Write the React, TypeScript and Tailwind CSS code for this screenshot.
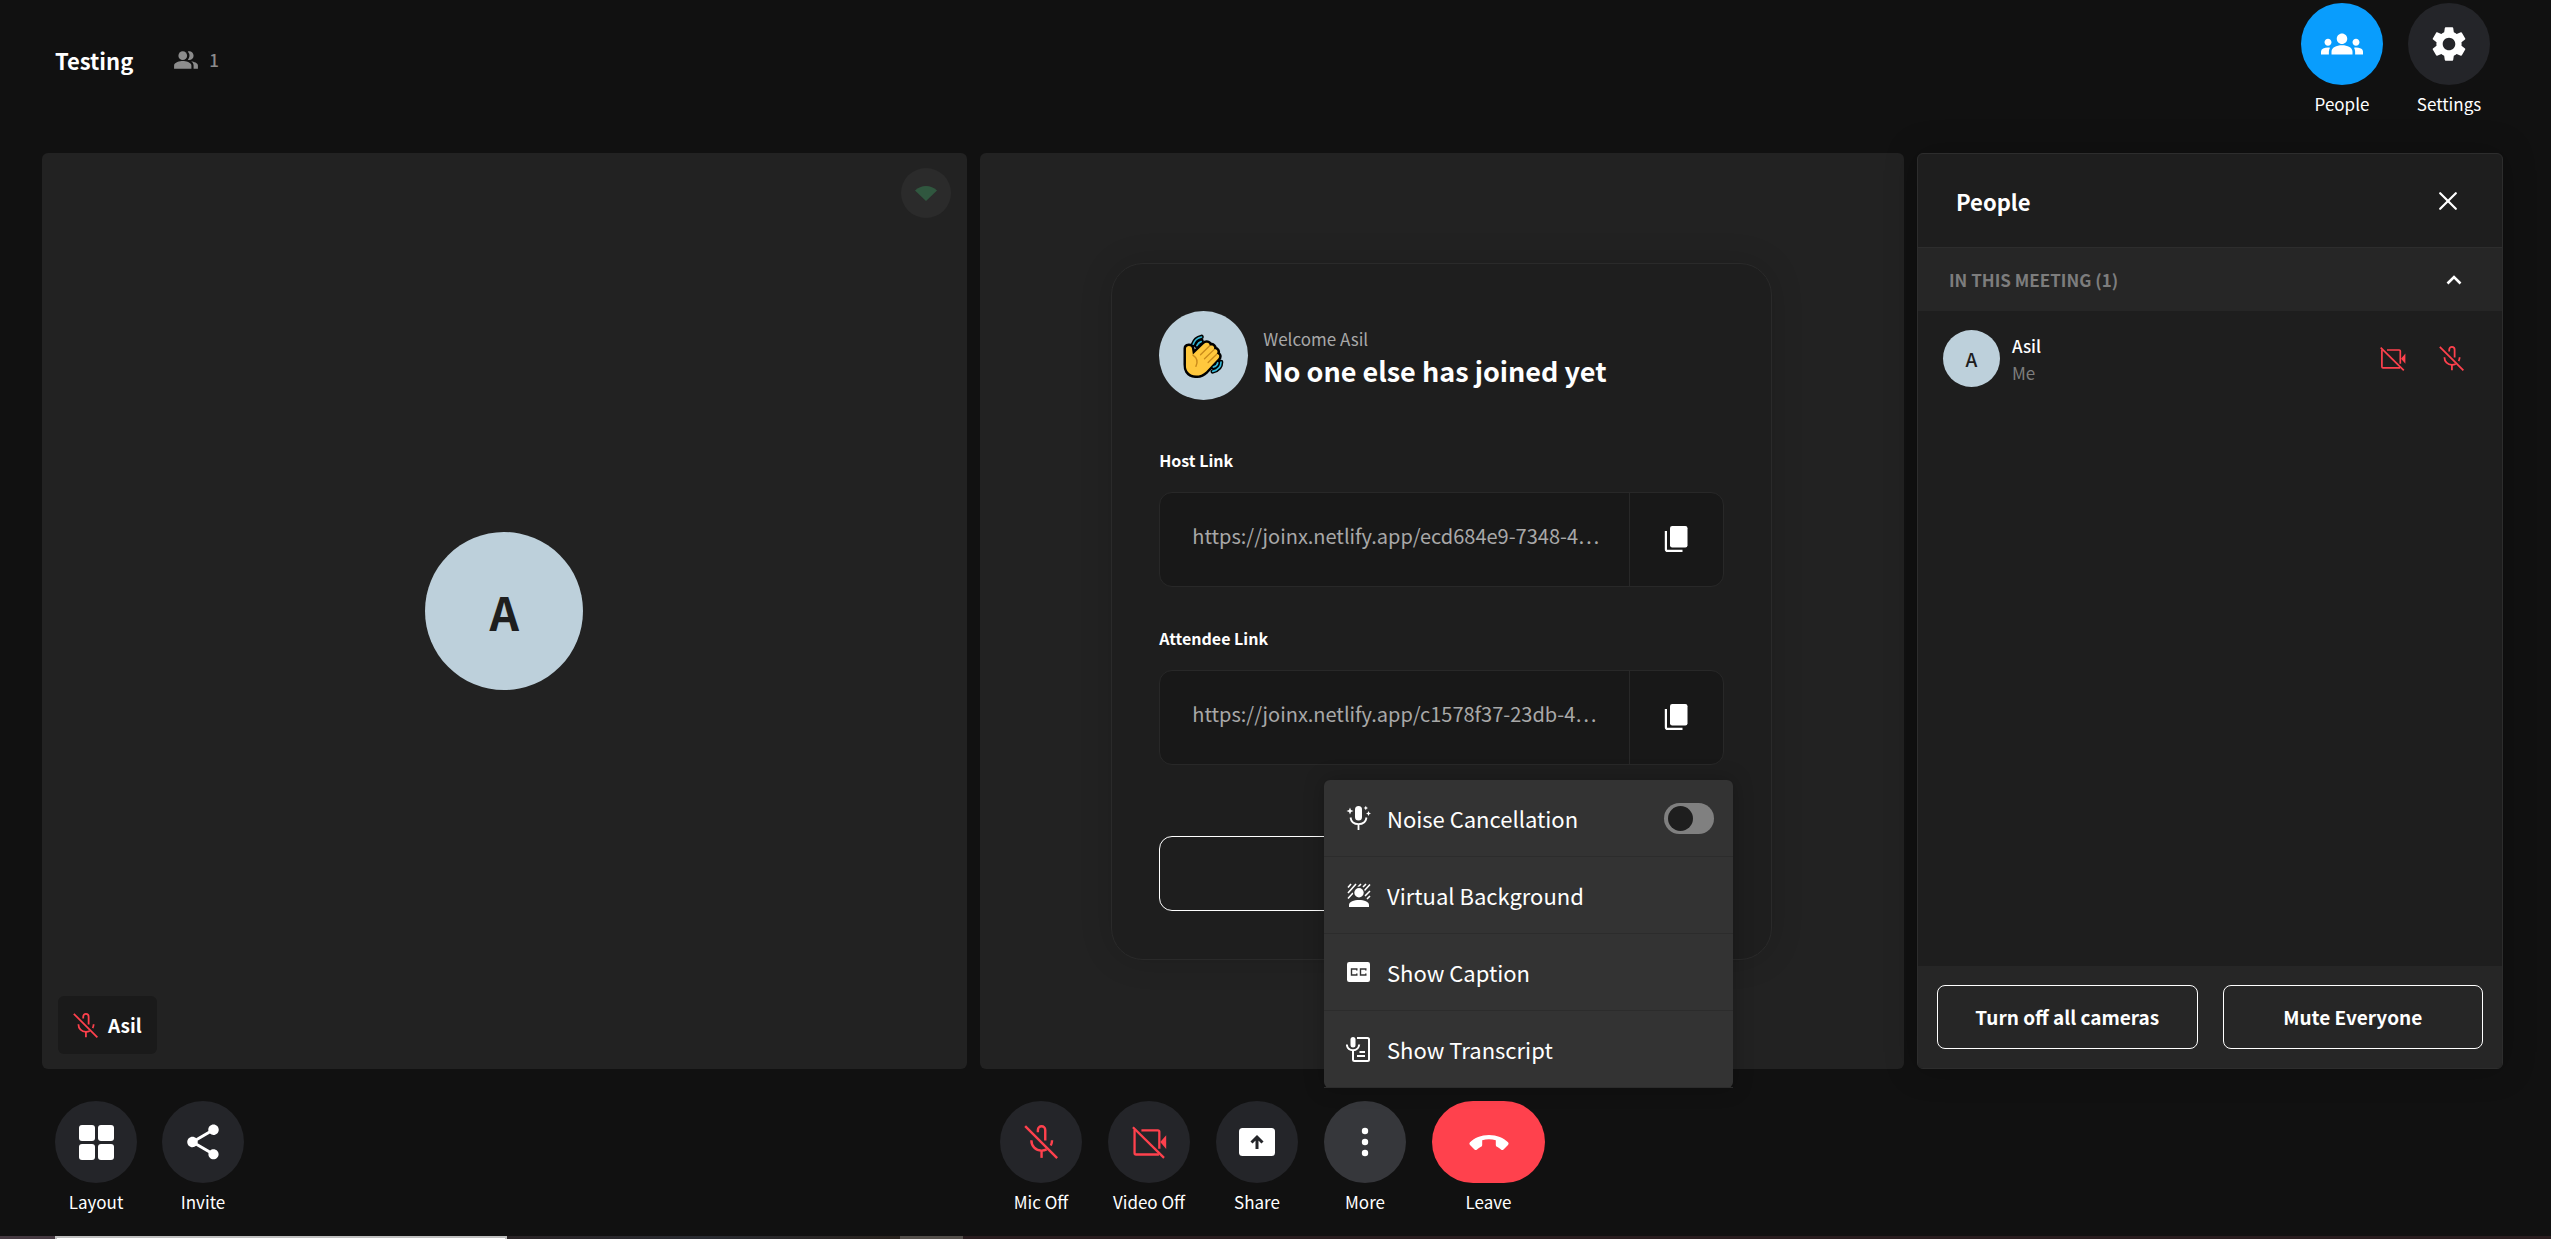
import React, { useState } from "react";
import { MdGroups, MdPeopleAlt, MdSettings, MdShare } from "react-icons/md";

const font = "font-['Noto_Sans_CJK_SC','Noto_Sans',sans-serif]";

function MicOff({ className }: { className: string }) {
  return (
    <svg viewBox="0 0 24 24" className={className} fill="none" stroke="#ff414d" strokeWidth="1.7" aria-hidden="true">
      <path d="M.8.8 23.4 23.4" />
      <path d="M9.8 5.2V3.5a2.6 2.6 0 0 1 5.2 0V11" />
      <path d="M5.2 10.8c0 4.2 3 7.3 7.2 7.3 1.4 0 2.5-.3 3.6-.9" />
      <path d="M19.8 10.8c0 1.5-.3 2.6-.9 3.7" />
      <path d="M12.4 18v5.2" />
    </svg>
  );
}

function VideoOff({ className }: { className: string }) {
  return (
    <svg viewBox="0 0 26 24" className={className} fill="none" stroke="#ff414d" strokeWidth="1.7" aria-hidden="true">
      <path d="M.7.7 23.8 23.4" />
      <path d="M1.9 2.4v17.4c0 .7.4 1.1 1.1 1.1h17" />
      <path d="M7 3h12.2c.7 0 1.1.4 1.1 1.1v12.6" />
      <path d="M21 11.7 25.4 6.6v10.2Z" fill="#ff414d" stroke="none" />
    </svg>
  );
}

function Round({ label, tone = "bg-[#242529]", wide = false, children }: { label: string; tone?: string; wide?: boolean; children: React.ReactNode }) {
  return (
    <button type="button" className="flex flex-col items-center gap-[7px]">
      <span className={`flex h-[82px] items-center justify-center rounded-full ${wide ? "w-[113px]" : "w-[82px]"} ${tone}`}>{children}</span>
      <span className="text-[17px] leading-6">{label}</span>
    </button>
  );
}

const hand =
  "M107 143c0-10 16-11 18-1l3 19 32-31c10-9 21-3 18 5 9-5 18 3 13 11 9-3 15 6 9 13 8 1 10 9 4 15l-36 38c-18 17-45 17-57-1-5-8-4-16-4-26Z";

function ClapHand() {
  return (
    <svg viewBox="95 96 130 136" className="h-[45px] w-[43px]" fill="none" strokeLinecap="round" strokeLinejoin="round" aria-hidden="true">
      <g stroke="#000" strokeWidth="14">
        <path d="M129 130c4-12 12-19 25-22M138 134c3-7 8-12 16-14" />
        <path d="M213 184c0 14-9 24-25 28M203 184c-1 7-6 13-14 15" />
      </g>
      <path d={hand} stroke="#000" strokeWidth="15" />
      <g stroke="#35b8d8" strokeWidth="5">
        <path d="M129 130c4-12 12-19 25-22M140 134c3-6 7-10 13-12" />
        <path d="M213 184c0 14-9 24-25 28M203 186c-1 6-6 11-13 13" />
      </g>
      <path d={hand} fill="#ffc83d" />
      <path d="M128 163c12 8 16 20 9 34M178 135l-27 27M191 147l-28 27M200 160l-26 25" stroke="#c98a1b" strokeWidth="4" />
    </svg>
  );
}

function LinkField({ label, url }: { label: string; url: string }) {
  return (
    <div>
      <h3 className="text-[16px] leading-6 font-bold">{label}</h3>
      <div className="mt-5 flex h-[95px] rounded-[13px] border border-[#282828] bg-[#181818]">
        <p className="min-w-0 flex-1 self-center truncate pr-4 pb-1.5 pl-8 text-[20px] leading-7 text-[#a8a8a8]">{url}</p>
        <button type="button" aria-label={`Copy ${label}`} className="flex w-[94px] items-center justify-center border-l border-[#282828] pr-0.5">
          <svg viewBox="0 0 24 28" className="h-7 w-6" aria-hidden="true">
            <rect x="6" y="1" width="17.5" height="21.5" rx="2.2" fill="#fff" />
            <path d="M1.9 6v18.2c0 1 .6 1.7 1.7 1.7H18.5" fill="none" stroke="#fff" strokeWidth="2.2" />
          </svg>
        </button>
      </div>
    </div>
  );
}

const row = "flex h-[77px] w-full items-center border-b border-[#2c2c2c] pl-[22px] pr-[19px] text-left text-[22px] leading-8";

function MoreMenu() {
  const [noise, setNoise] = useState(false);
  return (
    <div className="absolute bottom-full left-0 z-10 mb-[13px] w-[409px] rounded-md bg-[#333333] shadow-[0_0_20px_rgba(0,0,0,0.25)]">
      <label className={row}>
        <svg viewBox="0 0 25 26" className="mr-4 h-[26px] w-[25px]" fill="none" stroke="#fff" aria-hidden="true">
          <rect x="9" y="1" width="7" height="14.5" rx="3.5" fill="#fff" stroke="none" />
          <path d="M4.5 12.5c.6 4.2 3.7 6.7 8 6.7s7.4-2.5 8-6.7M12.5 19v6" strokeWidth="1.8" />
          <path d="m4 2.5 1 2.5 2.5 1-2.5 1-1 2.5L3 7 .5 6 3 5ZM19.8.8l.7 1.5 1.5.7-1.5.7-.7 1.5-.7-1.5-1.5-.7 1.5-.7ZM22.5 6l.8 1.7 1.7.8-1.7.8-.8 1.7-.8-1.7-1.7-.8 1.7-.8Z" fill="#fff" stroke="none" />
        </svg>
        <span className="flex-1">Noise Cancellation</span>
        <input type="checkbox" role="switch" checked={noise} onChange={(e) => setNoise(e.target.checked)} className="peer sr-only" />
        <span className="flex h-[31px] w-[50px] items-center rounded-full bg-[#808080] px-1 peer-checked:justify-end peer-checked:bg-[#099dfd]">
          <span className="size-[25px] rounded-full bg-[#1e1e1e]" />
        </span>
      </label>
      <button type="button" className={row}>
        <svg viewBox="0 0 25 26" className="mr-4 h-[26px] w-[25px]" aria-hidden="true">
          <path d="M2 5.5 5 2M2 11 10 2M2 16.5 7 11M12 5l3-3M17 5l3-3M18 9l6-6.5M19 14l5-5M21 17l3-3" stroke="#fff" strokeWidth="1.6" />
          <circle cx="13" cy="10.5" r="6" fill="#333" />
          <circle cx="13" cy="10.8" r="4.7" fill="#fff" />
          <path d="M3 25v-2c0-3.5 5-5 10-5s10 1.500 10 5v2Z" fill="#fff" />
        </svg>
        Virtual Background
      </button>
      <button type="button" className={row}>
        <svg viewBox="0 0 25 26" className="mr-4 h-[26px] w-[25px]" aria-hidden="true">
          <rect x="1" y="3" width="23" height="20" rx="2.2" fill="#fff" />
          <path d="M10.8 11.5V10H5.5v6h5.3v-1.5M19.8 11.5V10h-5.3v6h5.3v-1.5" fill="none" stroke="#333" strokeWidth="1.4" />
        </svg>
        Show Caption
      </button>
      <button type="button" className={row}>
        <svg viewBox="0 0 25 27" className="mr-4 h-[27px] w-[25px]" fill="none" stroke="#fff" strokeWidth="2" aria-hidden="true">
          <path d="M11 2h10.500c1 0 1.500.5 1.500 1.500v20c0 1-.5 1.500-1.500 1.500H8.500C7.500 25 7 24.500 7 23.500V15" />
          <rect x="4.5" y="1" width="5" height="10.5" rx="2.5" fill="#fff" stroke="none" />
          <path d="M.8 8.500c.4 3.600 2.700 5.700 6.200 5.700s5.800-2.100 6.200-5.700" />
          <path d="M13.500 16h5.500M11 20h8" />
        </svg>
        Show Transcript
      </button>
    </div>
  );
}

export default function App() {
  return (
    <div className={`flex h-screen min-h-[1100px] flex-col bg-[#111111] text-white ${font}`}>
      <header className="flex items-center pt-[3px] pr-[61px] pb-[37px] pl-[55px]">
        <h1 className="text-[22px] leading-8 font-bold">Testing</h1>
        <div className="ml-10 flex items-center gap-2.5 text-[#8c8c8c]">
          <MdPeopleAlt className="size-[26px]" aria-hidden="true" />
          <span className="text-[17px] leading-6 font-medium">1</span>
        </div>
        <div className="ml-auto flex gap-[25px]">
          <Round label="People" tone="bg-[#099dfd]"><MdGroups className="size-[42px]" /></Round>
          <Round label="Settings"><MdSettings className="size-[42px]" /></Round>
        </div>
      </header>

      <main className="flex min-h-0 flex-1 gap-[13px] pr-12 pl-[42px]">
        <section aria-label="Asil video" className="relative flex flex-1 items-center justify-center rounded-md bg-[#222222]">
          <span className="flex size-[158px] items-center justify-center rounded-full bg-[#bdd0db] text-[46px] leading-none font-bold text-[#1e1e1e]">A</span>
          <span className="absolute top-[15px] right-4 flex size-[50px] items-center justify-center rounded-full bg-[#2b2b2b]">
            <svg viewBox="0 0 22 15" className="h-[15px] w-[22px]" aria-hidden="true">
              <path d="M11 15 0 4.5C3 1.5 7 0 11 0s8 1.5 11 4.5Z" fill="#30573f" />
            </svg>
          </span>
          <div className="absolute bottom-[15px] left-4 flex h-[58px] items-center gap-[10px] rounded-md bg-[#1a1a1a] px-[15px]">
            <MicOff className="size-[25px]" />
            <span className="text-[19px] leading-7 font-bold">Asil</span>
          </div>
        </section>

        <section aria-label="Invite others" className="flex flex-1 items-center justify-center rounded-md bg-[#222222]">
          <div className="w-[661px] rounded-[32px] border border-[#2a2a2a] bg-[#1e1e1e] px-[47px] pt-[47px] pb-12 shadow-[0_0_32px_rgba(0,0,0,0.15)]">
            <div className="flex items-center gap-[15px]">
              <span className="flex size-[89px] items-center justify-center rounded-full bg-[#bdd0db]"><ClapHand /></span>
              <div className="pt-2">
                <p className="text-[17px] leading-6 text-[#a8a8a8]">Welcome Asil</p>
                <h2 className="text-[27px] leading-10 font-bold">No one else has joined yet</h2>
              </div>
            </div>
            <div className="mt-12 flex flex-col gap-[39px]">
              <LinkField label="Host Link" url="https://joinx.netlify.app/ecd684e9-7348-4…" />
              <LinkField label="Attendee Link" url="https://joinx.netlify.app/c1578f37-23db-4…" />
            </div>
            <button type="button" aria-label="Copy invitation" className="mt-[71px] block h-[75px] w-full rounded-[13px] border border-white" />
          </div>
        </section>

        <aside className="flex w-[586px] flex-col overflow-clip rounded-md border border-[#2d2d2d] bg-[#1e1e1e] shadow-[0_0_32px_rgba(0,0,0,0.25)]">
          <div className="flex h-[94px] items-center justify-between border-b border-[#2d2d2d] pr-[45px] pl-[38px]">
            <h2 className="text-[22px] leading-8 font-bold">People</h2>
            <button type="button" aria-label="Close">
              <svg viewBox="0 0 18 18" className="size-[18px]" stroke="#fff" strokeWidth="2.2" strokeLinecap="round" aria-hidden="true"><path d="m1.2 1.2 15.6 15.6M16.8 1.2 1.2 16.8" /></svg>
            </button>
          </div>
          <button type="button" aria-expanded="true" className="flex h-[63px] items-center justify-between bg-[#262626] pr-10 pl-[31px]">
            <span className="text-[17px] leading-6 font-bold text-[#7d7d7d]">IN THIS MEETING (1)</span>
            <svg viewBox="0 0 16 10" className="h-[10px] w-4" fill="none" stroke="#fff" strokeWidth="2.6" aria-hidden="true"><path d="m1.5 8.5 6.5-6.5 6.5 6.5" /></svg>
          </button>
          <div className="flex items-center py-[19px] pr-[38px] pl-[25px]">
            <span className="flex size-[57px] items-center justify-center rounded-full bg-[#bdd0db] text-[19px] leading-none font-medium text-[#1e1e1e]">A</span>
            <div className="ml-3 flex-1 text-[17px] leading-[27px]">
              <p className="font-medium">Asil</p>
              <p className="text-[#7d7d7d]">Me</p>
            </div>
            <button type="button" aria-label="Camera is off"><VideoOff className="h-6 w-[26px]" /></button>
            <button type="button" aria-label="Microphone is off" className="ml-[33px]"><MicOff className="size-[25px]" /></button>
          </div>
          <div className="mt-auto flex gap-[25px] bg-[#262626] px-[19px] py-[19px] text-[19px] leading-7 font-bold">
            <button type="button" className="h-16 flex-1 rounded-lg border border-white">Turn off all cameras</button>
            <button type="button" className="h-16 flex-1 rounded-lg border border-white">Mute Everyone</button>
          </div>
        </aside>
      </main>

      <footer className="flex pt-8 pr-[61px] pb-[22px] pl-[55px]">
        <div className="flex flex-1 gap-[25px]">
          <Round label="Layout">
            <svg viewBox="0 0 35 35" className="size-[35px]" fill="#fff" aria-hidden="true">
              <rect width="16" height="16" rx="3" /><rect x="19" width="16" height="16" rx="3" /><rect y="19" width="16" height="16" rx="3" /><rect x="19" y="19" width="16" height="16" rx="3" />
            </svg>
          </Round>
          <Round label="Invite"><MdShare className="size-[42px]" /></Round>
        </div>
        <nav aria-label="Call controls" className="flex gap-[26px]">
          <Round label="Mic Off"><MicOff className="size-[34px]" /></Round>
          <Round label="Video Off"><VideoOff className="h-[33px] w-[35px]" /></Round>
          <Round label="Share">
            <svg viewBox="0 0 36 28" className="h-7 w-9" aria-hidden="true">
              <rect width="36" height="28" rx="3.5" fill="#fff" />
              <path d="M18 21V9M12.5 14.5 18 9l5.5 5.5" fill="none" stroke="#242529" strokeWidth="3" />
            </svg>
          </Round>
          <div className="relative">
            <Round label="More" tone="bg-[#36373b]">
              <svg viewBox="0 0 8 30" className="h-[30px] w-2" fill="#fff" aria-hidden="true"><circle cx="4" cy="4" r="3.2" /><circle cx="4" cy="15" r="3.2" /><circle cx="4" cy="26" r="3.2" /></svg>
            </Round>
            <MoreMenu />
          </div>
          <Round label="Leave" tone="bg-[#ff414d]" wide>
            <svg viewBox="0 0 40 17" className="h-[17px] w-10" fill="#fff" aria-hidden="true">
              <path d="M20 1C12 1 5.500 4 1 8.300c-.8.8-.8 1.800 0 2.600l4.500 4.500c.8.800 1.700.8 2.500.1 1.200-1.200 2.600-2 4-2.700.8-.4 1.200-1 1.200-1.900V6.300C17.500 5 22.500 5 26.800 6.300v4.600c0 .9.400 1.500 1.200 1.900 1.400.7 2.800 1.500 4 2.700.8.700 1.700.7 2.500-.1l4.500-4.500c.8-.8.8-1.800 0-2.600C34.500 4 28 1 20 1Z" />
            </svg>
          </Round>
        </nav>
        <div className="flex-1" />
      </footer>

      <div className="flex h-[3px] shrink-0" aria-hidden="true">
        <div className="w-[55px] bg-[#463a42]" />
        <div className="w-[452px] border-x-2 border-t-2 border-[#c0c0c0] bg-white" />
        <div className="w-[393px] bg-linear-to-r from-[#2a2426] via-[#2a2c32] to-[#2a231e]" />
        <div className="w-[63px] bg-[#544f4b]" />
        <div className="flex-1 bg-[#2a1d1f]" />
      </div>
    </div>
  );
}
